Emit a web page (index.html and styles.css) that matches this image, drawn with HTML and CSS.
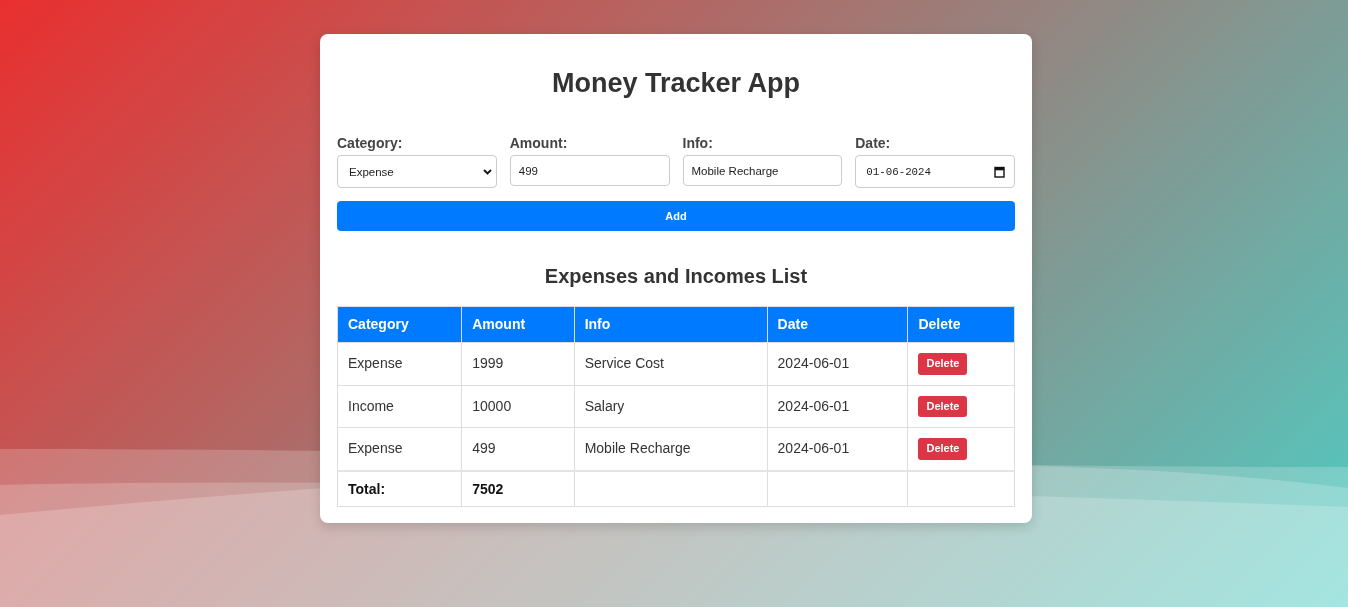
FILE: index.html
```html
<!DOCTYPE html>
<html lang="en">
<head>
    <meta charset="UTF-8">
    <meta name="viewport" content="width=device-width, initial-scale=1.0">
    <title>Money Tracker App</title>
    <link rel="stylesheet" href="styles.css">
</head>
<body>
    <svg class="waves" viewBox="0 0 1348 160" preserveAspectRatio="none" aria-hidden="true">
        <path d="M0,2 C600,2 800,20 1348,20 L1348,160 L0,160 Z"></path>
        <path d="M0,38 Q500,28 1348,60 L1348,160 L0,160 Z"></path>
        <path d="M0,68 Q900,-17 1348,41 L1348,160 L0,160 Z"></path>
    </svg>

    <div class="container">
        <h1>Money Tracker App</h1>
        <form class="entry-form" id="entry-form">
            <div class="fields">
                <div class="field">
                    <label for="category">Category:</label>
                    <div class="control">
                        <select id="category">
                            <option>Expense</option>
                            <option>Income</option>
                        </select>
                        <svg class="control-icon chevron" width="9" height="6" viewBox="0 0 9 6">
                            <path d="M1 1 L4.5 4.5 L8 1" fill="none" stroke="#111" stroke-width="1.8"/>
                        </svg>
                    </div>
                </div>
                <div class="field">
                    <label for="amount">Amount:</label>
                    <input type="text" id="amount" value="499">
                </div>
                <div class="field">
                    <label for="info">Info:</label>
                    <input type="text" id="info" value="Mobile Recharge">
                </div>
                <div class="field">
                    <label for="date">Date:</label>
                    <div class="control">
                        <input type="text" id="date" class="date-input" value="01-06-2024">
                        <svg class="control-icon calendar" width="11" height="12" viewBox="0 0 11 12">
                            <rect x="1" y="1.5" width="9" height="9.5" fill="none" stroke="#111" stroke-width="1.4"/>
                            <rect x="1" y="1.5" width="9" height="2.8" fill="#111"/>
                        </svg>
                    </div>
                </div>
            </div>
            <button type="submit" class="add-btn">Add</button>
        </form>

        <h2>Expenses and Incomes List</h2>
        <table class="records">
            <thead>
                <tr>
                    <th>Category</th>
                    <th>Amount</th>
                    <th>Info</th>
                    <th>Date</th>
                    <th>Delete</th>
                </tr>
            </thead>
            <tbody>
                <tr>
                    <td>Expense</td>
                    <td>1999</td>
                    <td>Service Cost</td>
                    <td>2024-06-01</td>
                    <td><button class="delete-btn">Delete</button></td>
                </tr>
                <tr>
                    <td>Income</td>
                    <td>10000</td>
                    <td>Salary</td>
                    <td>2024-06-01</td>
                    <td><button class="delete-btn">Delete</button></td>
                </tr>
                <tr>
                    <td>Expense</td>
                    <td>499</td>
                    <td>Mobile Recharge</td>
                    <td>2024-06-01</td>
                    <td><button class="delete-btn">Delete</button></td>
                </tr>
            </tbody>
            <tfoot>
                <tr class="total-row">
                    <td>Total:</td>
                    <td>7502</td>
                    <td></td>
                    <td></td>
                    <td></td>
                </tr>
            </tfoot>
        </table>
    </div>
</body>
</html>
```

FILE: styles.css
```css
html {
    height: 100%;
}

body {
    font-family: 'Liberation Sans', Arial, sans-serif;
    margin: 0;
    min-height: 100vh;
    box-sizing: border-box;
    padding: 34px 0 0 4px;
    display: flex;
    justify-content: center;
    align-items: flex-start;
    background: linear-gradient(135deg, #e92f2f 0%, #4ecdc4 100%);
    overflow: hidden;
}

.waves {
    position: fixed;
    left: 0;
    bottom: 0;
    width: 100%;
    height: 160px;
    z-index: 0;
    pointer-events: none;
}

.waves path {
    fill: rgba(255, 255, 255, 0.2);
}

.container {
    position: relative;
    z-index: 1;
    width: 712px;
    box-sizing: border-box;
    padding: 17px 17px 16px;
    background-color: #fff;
    border-radius: 8px;
    box-shadow: 0 4px 12px rgba(0, 0, 0, 0.15);
}

h1 {
    text-align: center;
    font-size: 27px;
    line-height: 31px;
    color: #333;
    margin: 17px 0 36px;
}

.fields {
    display: grid;
    grid-template-columns: repeat(4, 1fr);
    gap: 13px;
}

label {
    display: block;
    font-size: 14px;
    line-height: 16px;
    font-weight: bold;
    color: #444;
    margin-bottom: 4px;
}

.control {
    position: relative;
}

.field input,
.field select {
    display: block;
    width: 100%;
    height: 31px;
    box-sizing: border-box;
    padding: 0 8px;
    border: 1px solid #ccc;
    border-radius: 4px;
    background-color: #fff;
    font-family: 'Liberation Sans', Arial, sans-serif;
    font-size: 11.5px;
    color: #222;
    outline: none;
}

.field select {
    height: 33px;
    padding-left: 11px;
    appearance: none;
    -webkit-appearance: none;
}

.field .date-input {
    height: 33px;
    padding-left: 10px;
    font-family: 'Liberation Mono', 'DejaVu Sans Mono', monospace;
    font-size: 10.8px;
}

.control-icon {
    position: absolute;
    top: 50%;
    transform: translateY(-50%);
    pointer-events: none;
}

.chevron {
    right: 5px;
}

.calendar {
    right: 10px;
}

.add-btn {
    display: block;
    width: 100%;
    height: 30px;
    margin-top: 13px;
    background-color: #007bff;
    color: #fff;
    border: none;
    border-radius: 4px;
    font-family: 'Liberation Sans', Arial, sans-serif;
    font-size: 11px;
    font-weight: bold;
    cursor: pointer;
}

h2 {
    text-align: center;
    font-size: 20px;
    line-height: 23px;
    color: #333;
    margin: 34px 0 18px;
}

.records {
    width: 100%;
    border-collapse: collapse;
    font-size: 14px;
    color: #333;
}

.records th,
.records td {
    border: 1px solid #ddd;
    padding: 10px;
    line-height: 15px;
    text-align: left;
}

.records th {
    background-color: #007bff;
    color: #fff;
}

.delete-btn {
    background-color: #dc3545;
    color: #fff;
    border: none;
    border-radius: 3px;
    padding: 4px 8px;
    font-family: 'Liberation Sans', Arial, sans-serif;
    font-size: 11px;
    line-height: 13.5px;
    font-weight: bold;
    cursor: pointer;
}

.total-row td {
    font-weight: bold;
    color: #111;
    border-top: 2px solid #e4e4e4;
    padding-bottom: 9px;
}
```
